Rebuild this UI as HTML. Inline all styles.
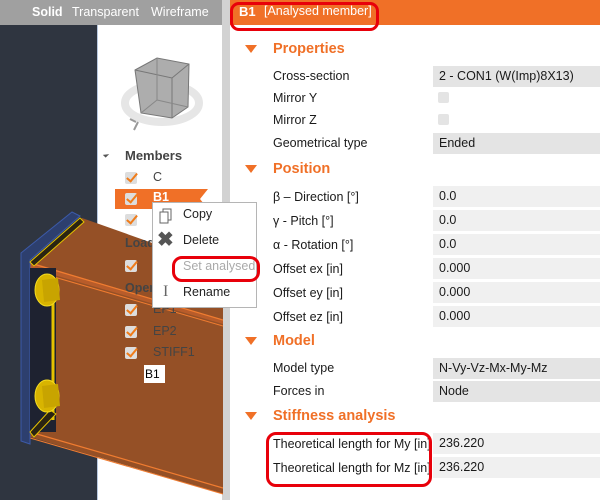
<!DOCTYPE html>
<html><head><meta charset="utf-8"><style>
*{margin:0;padding:0;box-sizing:border-box}
body{width:600px;height:500px;overflow:hidden;position:relative;font-family:"Segoe UI","Liberation Sans",sans-serif;background:#fff}
.a{position:absolute;white-space:nowrap}
.lbl{position:absolute;left:273px;font-size:12.5px;color:#1a1a1a;line-height:16px}
.cell{position:absolute;left:433px;width:167px;height:21px;font-size:12.5px;color:#1a1a1a;padding-left:6px;line-height:21px}
.g1{background:#e4e4e4}.g2{background:#f0f0f0}
.hd{position:absolute;left:273px;font-size:14.5px;font-weight:bold;color:#f07027}
.tri{position:absolute;left:245px;width:0;height:0;border-left:6px solid transparent;border-right:6px solid transparent;border-top:8px solid #f07027}
.tr{position:absolute;font-size:12.5px;color:#444;font-weight:bold}
.cb{position:absolute;left:125px;width:12px;height:12px;background:#ddd;border-radius:2px}
.cb:after{content:"";position:absolute;left:4px;top:-1px;width:4px;height:9px;border:solid #f07c1a;border-width:0 2px 2px 0;transform:rotate(40deg)}
.tn{position:absolute;left:153px;font-size:12.5px;color:#444}
</style></head><body>
<div class="a" style="left:0;top:0;width:97px;height:500px;background:#2f3540"></div>
<div class="a" style="left:97px;top:25px;width:126px;height:475px;background:#fff;border-left:1px solid #b8c8e0"></div>
<div class="a" style="left:222px;top:0;width:8px;height:500px;background:#d2d2d2"></div>
<div class="a" style="left:0;top:0;width:222px;height:25px;background:#a0a0a0"></div>
<div class="a" style="left:32px;top:5px;font-size:12.5px;color:#fff;font-weight:bold">Solid</div>
<div class="a" style="left:72px;top:5px;font-size:12.5px;color:#fff">Transparent</div>
<div class="a" style="left:151px;top:5px;font-size:12.5px;color:#fff">Wireframe</div>
<svg class="a" style="left:100px;top:40px" width="120" height="100" viewBox="100 40 120 100">
<ellipse cx="162" cy="103" rx="37" ry="19" fill="none" stroke="#e6e6e6" stroke-width="8"/>
<polygon points="135,70 157,58 189,64 188,107 172,118 141,113" fill="#adadad" stroke="#777"/>
<polyline points="135,70 172,78 189,64" fill="none" stroke="#777"/>
<line x1="172" y1="78" x2="172" y2="118" stroke="#777"/>
<line x1="157" y1="58" x2="157" y2="100" stroke="#888"/>
<line x1="157" y1="100" x2="141" y2="113" stroke="#888"/>
<line x1="157" y1="100" x2="188" y2="107" stroke="#888"/>
<path d="M138 122 l-4 8 M130 119 l6 3" stroke="#999" stroke-width="2"/>
</svg>
<svg class="a" style="left:0;top:190px" width="223" height="310" viewBox="0 190 223 310">
<polygon points="82,218 223,268 223,494 30,437 30,262" fill="#955026"/>
<polygon points="30,262 223,320 223,324 30,268" fill="#b85c2a"/>
<line x1="30" y1="263" x2="223" y2="320" stroke="#f07c30" stroke-width="1.2"/>
<line x1="30" y1="270" x2="223" y2="326" stroke="#f07c30" stroke-width="1"/>
<line x1="30" y1="432" x2="223" y2="488" stroke="#f07c30" stroke-width="1.2"/>
<line x1="30" y1="438" x2="223" y2="494" stroke="#f07c30" stroke-width="1"/>
<polygon points="21,253 72,212 80,216 30,260 30,444 21,441" fill="#2d3f6e" stroke="#3c5aa8"/>
<polygon points="30,262 80,218 84,222 34,266" fill="#2a2412" stroke="#e6c200"/>
<rect x="30" y="268" width="26" height="164" fill="#1e2230"/>
<line x1="53" y1="280" x2="53" y2="420" stroke="#e6c200" stroke-width="3"/>
<polygon points="30,432 50,410 56,414 34,437" fill="#2a2412" stroke="#e6c200"/>
<g fill="#d8b400" stroke="#f5dc20"><ellipse cx="47" cy="290" rx="12" ry="16"/><ellipse cx="47" cy="396" rx="12" ry="16"/></g>
<g fill="#c8a400"><polygon points="42,280 58,278 60,300 44,302"/><polygon points="42,386 58,384 60,406 44,408"/></g>
</svg>
<div class="a" style="left:104px;top:152px;border-left:4px solid transparent;border-bottom:5px solid #555;width:0;height:0;transform:rotate(45deg)"></div>
<div class="tr" style="left:125px;top:148px;font-size:13px">Members</div>
<div class="a" style="left:115px;top:189px;width:85px;height:20px;background:#f07027"></div>
<div class="a" style="left:200px;top:189px;width:0;height:0;border-top:10px solid #f07027;border-bottom:10px solid #f07027;border-right:8px solid transparent"></div>
<div class="cb" style="top:172px"></div><div class="tn" style="top:170px">C</div>
<div class="cb" style="top:193px"></div><div class="tn" style="top:190px;color:#fff;font-weight:bold">B1</div>
<div class="cb" style="top:214px"></div>
<div class="tr" style="left:125px;top:236px">Load</div>
<div class="cb" style="top:260px"></div>
<div class="tr" style="left:125px;top:281px">Oper</div>
<div class="cb" style="top:304px"></div><div class="tn" style="top:302px">EP1</div>
<div class="cb" style="top:326px"></div><div class="tn" style="top:324px">EP2</div>
<div class="cb" style="top:347px"></div><div class="tn" style="top:345px">STIFF1</div>
<div class="a" style="left:144px;top:365px;width:21px;height:18px;background:#fff;font-size:12px;line-height:18px;color:#000;padding-left:1px">B1</div>
<div class="a" style="left:152px;top:202px;width:105px;height:106px;background:#fff;border:1px solid #b5b5b5"></div>
<svg class="a" style="left:158px;top:207px" width="18" height="18"><rect x="5" y="2" width="8" height="11" fill="none" stroke="#666"/><rect x="2" y="5" width="8" height="11" fill="#fff" stroke="#666"/></svg>
<div class="a" style="left:183px;top:207px;font-size:12.5px;color:#222">Copy</div>
<div class="a" style="left:157px;top:230px;font-size:20px;font-weight:bold;color:#555;line-height:20px">✖</div>
<div class="a" style="left:183px;top:233px;font-size:12.5px;color:#222">Delete</div>
<div class="a" style="left:183px;top:259px;font-size:12.5px;color:#aaa">Set analysed</div>
<div class="a" style="left:172px;top:256px;width:88px;height:26px;border:3px solid #e8000a;border-radius:10px"></div>
<div class="a" style="left:163px;top:283px;font-size:16px;color:#666;font-family:'Liberation Serif',serif">I</div>
<div class="a" style="left:183px;top:285px;font-size:12.5px;color:#222">Rename</div>
<div class="a" style="left:230px;top:0;width:370px;height:25px;background:#f07027"></div>
<div class="a" style="left:239px;top:4px;font-size:13px;color:#fff;font-weight:bold">B1</div>
<div class="a" style="left:264px;top:4px;font-size:12.5px;color:#fff">[Analysed member]</div>
<div class="a" style="left:230px;top:2px;width:149px;height:29px;border:3px solid #e8000a;border-radius:9px"></div>

<div class="tri" style="top:45px"></div><div class="hd" style="top:41px">Properties</div>
<div class="lbl" style="top:68px">Cross-section</div><div class="cell g1" style="top:66px">2 - CON1 (W(Imp)8X13)</div>
<div class="lbl" style="top:90px">Mirror Y</div><div class="a" style="left:438px;top:92px;width:11px;height:11px;background:#e4e4e4;border-radius:2px"></div>
<div class="lbl" style="top:112px">Mirror Z</div><div class="a" style="left:438px;top:114px;width:11px;height:11px;background:#e4e4e4;border-radius:2px"></div>
<div class="lbl" style="top:135px">Geometrical type</div><div class="cell g1" style="top:133px">Ended</div>

<div class="tri" style="top:165px"></div><div class="hd" style="top:161px">Position</div>
<div class="lbl" style="top:189px">β – Direction [°]</div><div class="cell g2" style="top:186px">0.0</div>
<div class="lbl" style="top:213px">γ - Pitch [°]</div><div class="cell g2" style="top:210px">0.0</div>
<div class="lbl" style="top:237px">α - Rotation [°]</div><div class="cell g2" style="top:234px">0.0</div>
<div class="lbl" style="top:261px">Offset ex [in]</div><div class="cell g2" style="top:258px">0.000</div>
<div class="lbl" style="top:285px">Offset ey [in]</div><div class="cell g2" style="top:282px">0.000</div>
<div class="lbl" style="top:309px">Offset ez [in]</div><div class="cell g2" style="top:306px">0.000</div>

<div class="tri" style="top:337px"></div><div class="hd" style="top:333px">Model</div>
<div class="lbl" style="top:360px">Model type</div><div class="cell g1" style="top:358px">N-Vy-Vz-Mx-My-Mz</div>
<div class="lbl" style="top:383px">Forces in</div><div class="cell g1" style="top:381px">Node</div>

<div class="tri" style="top:412px"></div><div class="hd" style="top:408px">Stiffness analysis</div>
<div class="lbl" style="top:436px">Theoretical length for My [in]</div><div class="cell g2" style="top:433px">236.220</div>
<div class="lbl" style="top:460px">Theoretical length for Mz [in]</div><div class="cell g2" style="top:457px">236.220</div>
<div class="a" style="left:266px;top:432px;width:166px;height:55px;border:3px solid #e8000a;border-radius:10px"></div>
</body></html>
